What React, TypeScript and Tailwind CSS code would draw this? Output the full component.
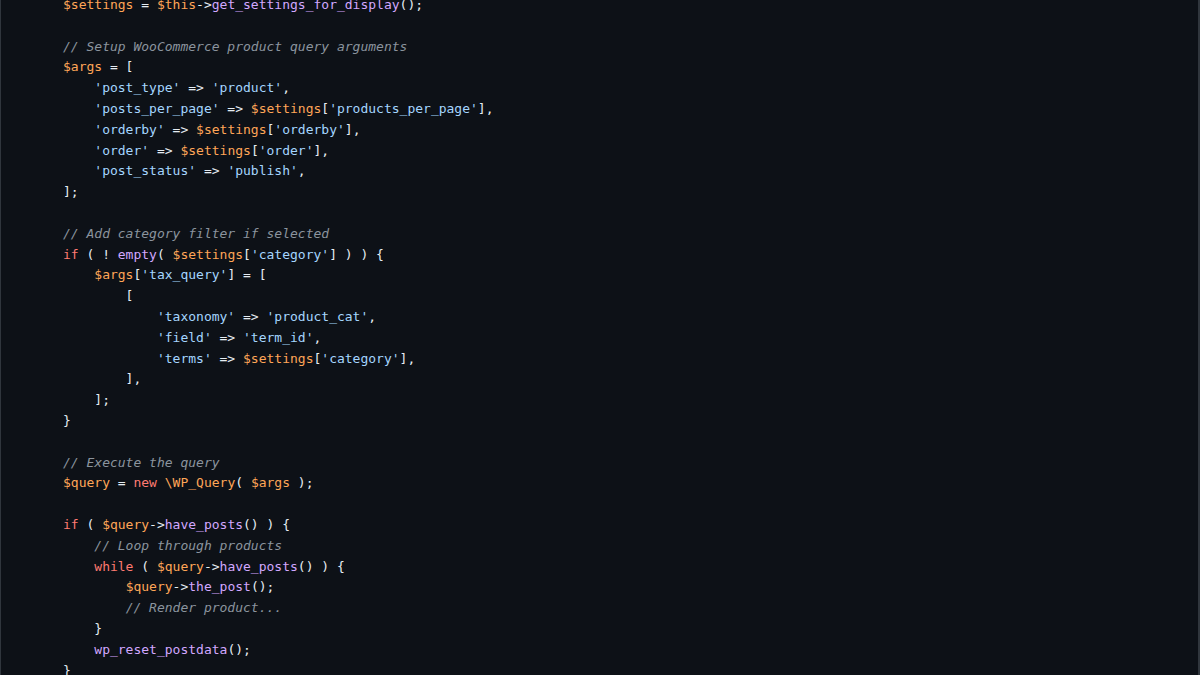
type Tok = [string, string];

const C = {
  txt: "text-[#e6edf3]",
  str: "text-[#a5d6ff]",
  vr: "text-[#ffa657]",
  kw: "text-[#ff7b72]",
  fn: "text-[#d2a8ff]",
  cm: "text-[#8b949e] italic",
};

const lines: Tok[][] = [
  [["$settings", C.vr], [" = ", C.txt], ["$this", C.vr], ["->", C.txt], ["get_settings_for_display", C.fn], ["();", C.txt]],
  [],
  [["// Setup WooCommerce product query arguments", C.cm]],
  [["$args", C.vr], [" = [", C.txt]],
  [["    ", C.txt], ["'post_type'", C.str], [" => ", C.txt], ["'product'", C.str], [",", C.txt]],
  [["    ", C.txt], ["'posts_per_page'", C.str], [" => ", C.txt], ["$settings", C.vr], ["[", C.txt], ["'products_per_page'", C.str], ["],", C.txt]],
  [["    ", C.txt], ["'orderby'", C.str], [" => ", C.txt], ["$settings", C.vr], ["[", C.txt], ["'orderby'", C.str], ["],", C.txt]],
  [["    ", C.txt], ["'order'", C.str], [" => ", C.txt], ["$settings", C.vr], ["[", C.txt], ["'order'", C.str], ["],", C.txt]],
  [["    ", C.txt], ["'post_status'", C.str], [" => ", C.txt], ["'publish'", C.str], [",", C.txt]],
  [["];", C.txt]],
  [],
  [["// Add category filter if selected", C.cm]],
  [["if", C.kw], [" ( ! ", C.txt], ["empty", C.fn], ["( ", C.txt], ["$settings", C.vr], ["[", C.txt], ["'category'", C.str], ["] ) ) {", C.txt]],
  [["    ", C.txt], ["$args", C.vr], ["[", C.txt], ["'tax_query'", C.str], ["] = [", C.txt]],
  [["        [", C.txt]],
  [["            ", C.txt], ["'taxonomy'", C.str], [" => ", C.txt], ["'product_cat'", C.str], [",", C.txt]],
  [["            ", C.txt], ["'field'", C.str], [" => ", C.txt], ["'term_id'", C.str], [",", C.txt]],
  [["            ", C.txt], ["'terms'", C.str], [" => ", C.txt], ["$settings", C.vr], ["[", C.txt], ["'category'", C.str], ["],", C.txt]],
  [["        ],", C.txt]],
  [["    ];", C.txt]],
  [["}", C.txt]],
  [],
  [["// Execute the query", C.cm]],
  [["$query", C.vr], [" = ", C.txt], ["new", C.kw], [" ", C.txt], ["\\WP_Query", C.vr], ["( ", C.txt], ["$args", C.vr], [" );", C.txt]],
  [],
  [["if", C.kw], [" ( ", C.txt], ["$query", C.vr], ["->", C.txt], ["have_posts", C.fn], ["() ) {", C.txt]],
  [["    ", C.txt], ["// Loop through products", C.cm]],
  [["    ", C.txt], ["while", C.kw], [" ( ", C.txt], ["$query", C.vr], ["->", C.txt], ["have_posts", C.fn], ["() ) {", C.txt]],
  [["        ", C.txt], ["$query", C.vr], ["->", C.txt], ["the_post", C.fn], ["();", C.txt]],
  [["        ", C.txt], ["// Render product...", C.cm]],
  [["    }", C.txt]],
  [["    ", C.txt], ["wp_reset_postdata", C.fn], ["();", C.txt]],
  [["}", C.txt]],
];

export default function App() {
  return (
    <div className="w-[1200px] h-[675px] overflow-hidden bg-[#0d1117] border-l border-r-2 border-[#30363d]">
      <pre className="-mt-[5px] pl-[62px] font-['DejaVu_Sans_Mono',monospace] text-[13px] leading-[20.8px] text-[#e6edf3]">
        {lines.map((line, i) => (
          <div key={i} className="h-[20.8px] whitespace-pre">
            {line.length === 0
              ? " "
              : line.map(([t, cls], j) => (
                  <span key={j} className={cls}>
                    {t}
                  </span>
                ))}
          </div>
        ))}
      </pre>
    </div>
  );
}
